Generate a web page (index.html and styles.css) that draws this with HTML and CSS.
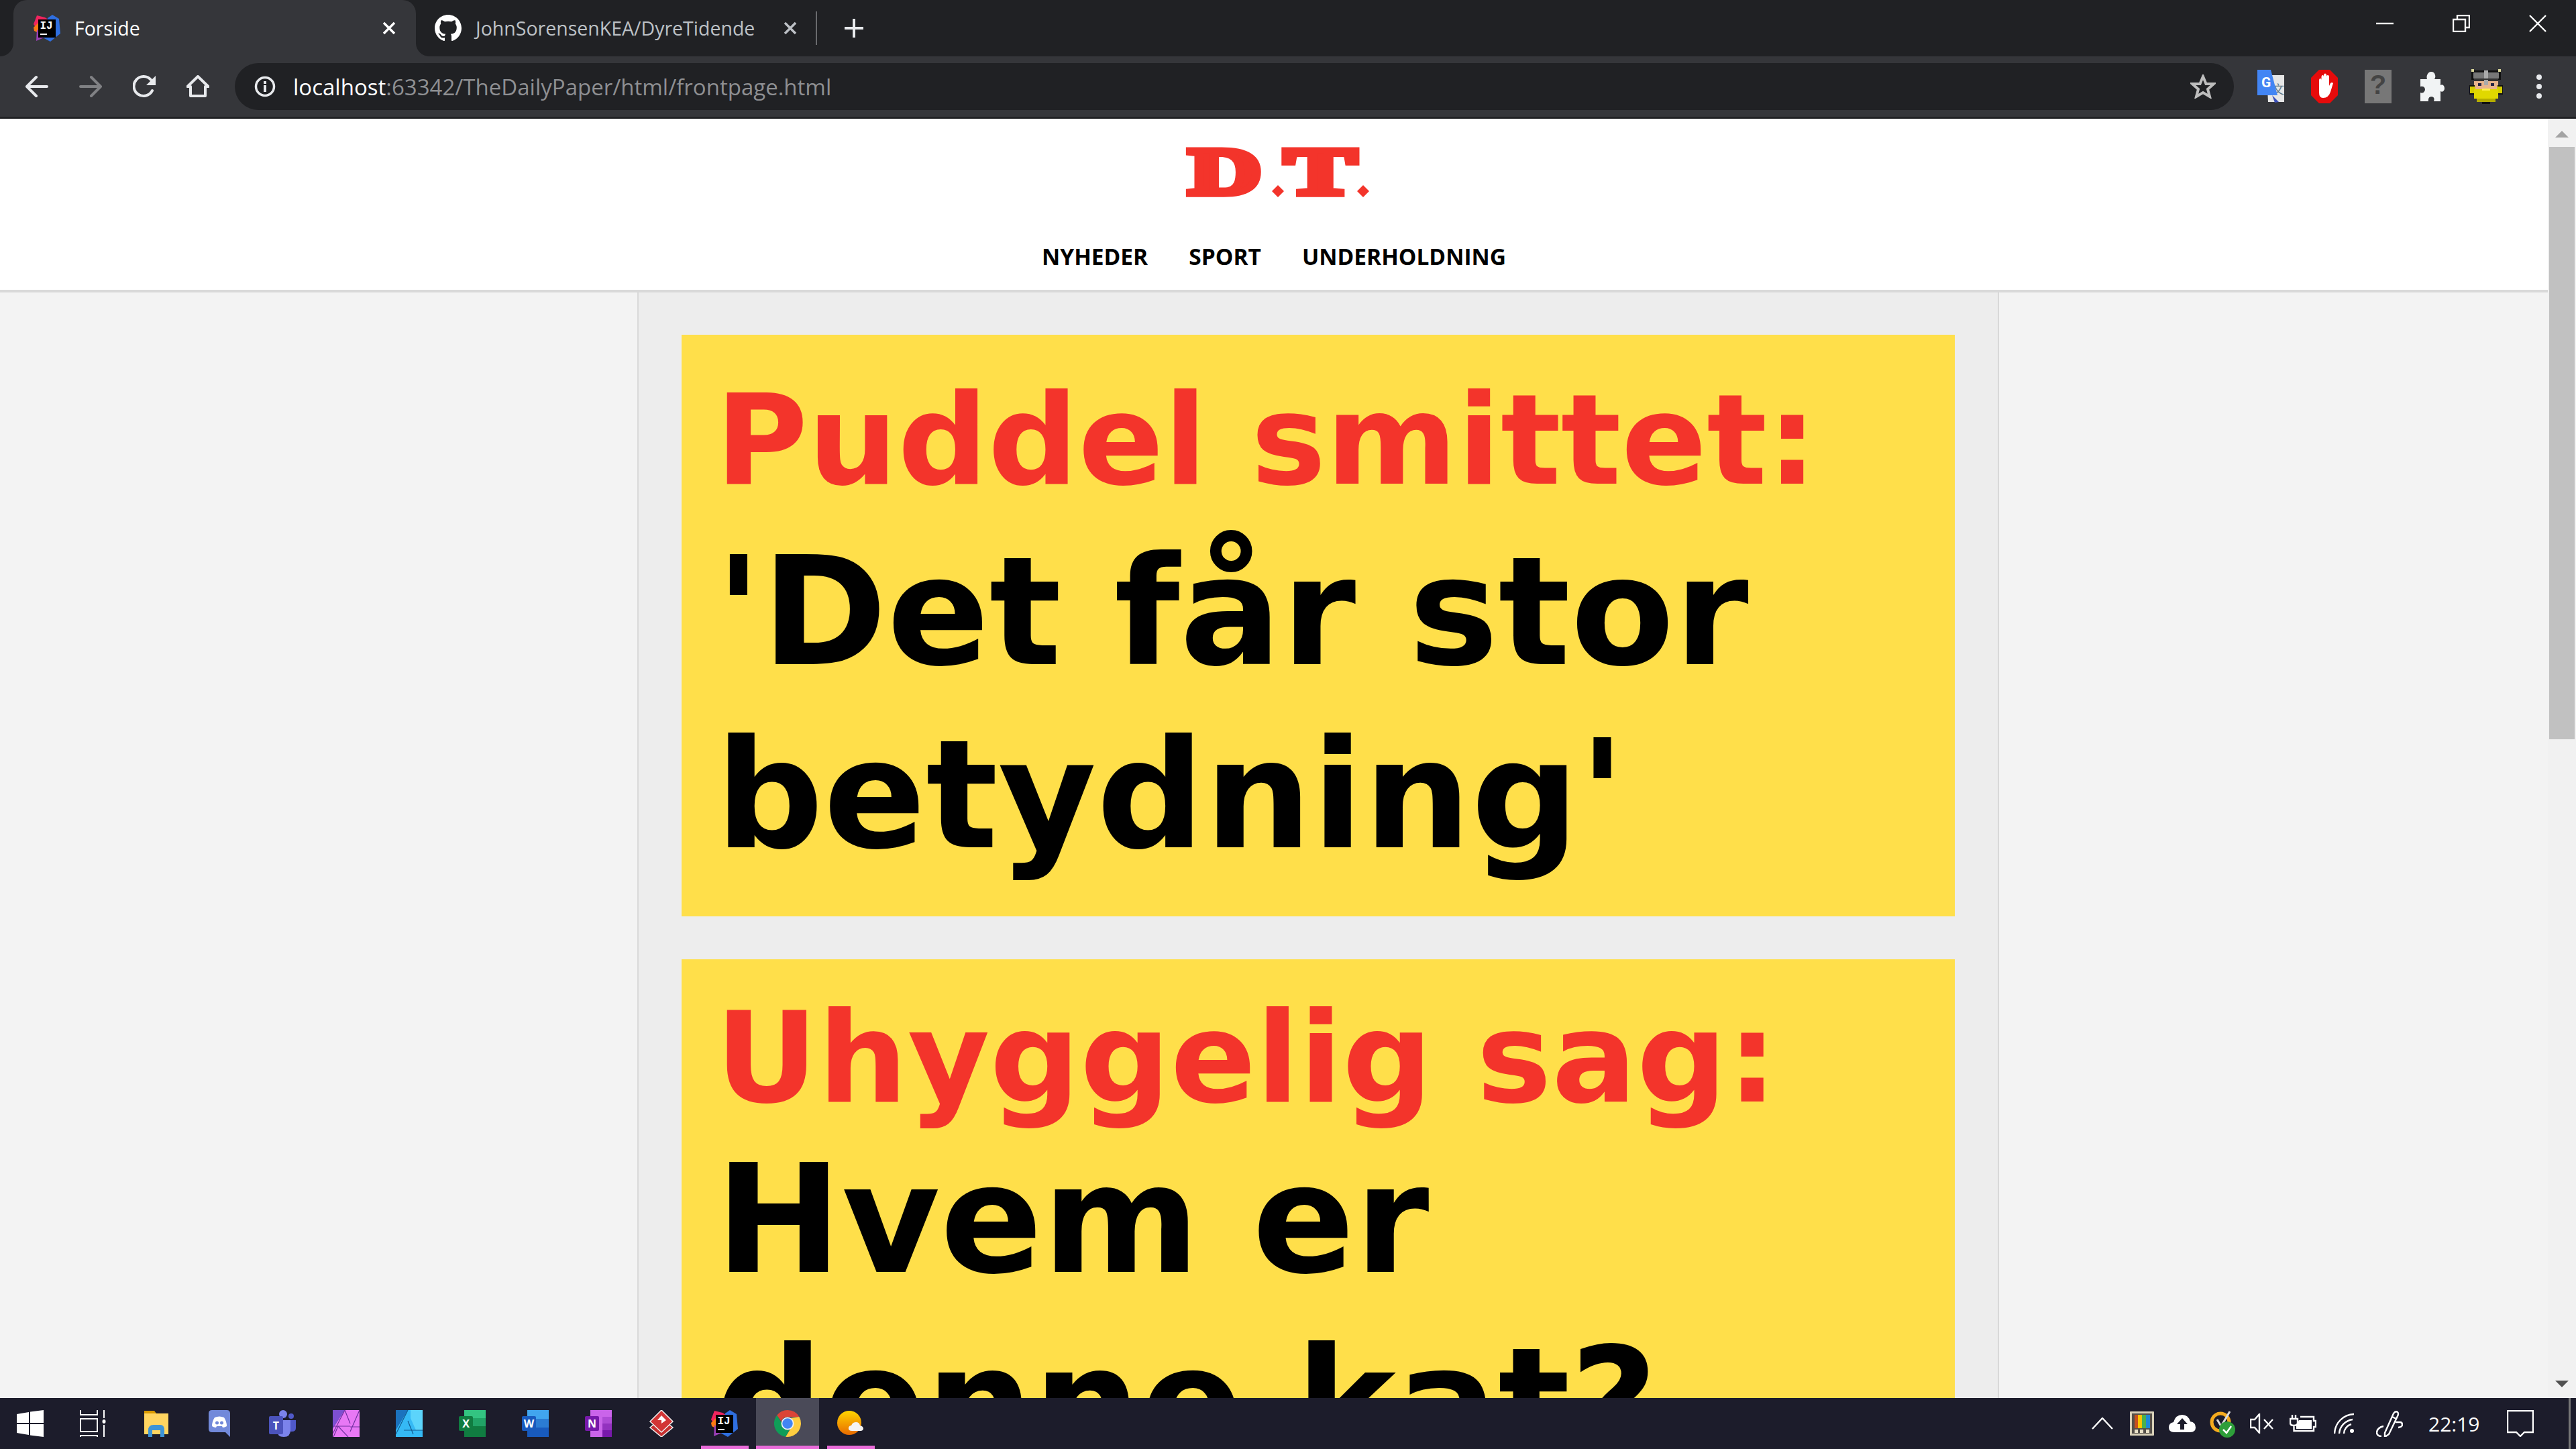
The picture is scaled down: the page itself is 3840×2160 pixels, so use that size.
FILE: index.html
```html
<!DOCTYPE html>
<html lang="da">
<head>
    <meta charset="UTF-8">
    <title>Forside</title>
    <link rel="stylesheet" href="styles.css">
</head>
<body>
<svg class="defs" width="0" height="0">
    <defs>
        <symbol id="ij" viewBox="0 0 40 40">
            <polygon points="5,1 17,4 25,9 8,26 0,14" fill="#f0245e"/>
            <polygon points="0,19 7,12 9,28 1,24" fill="#f97a12"/>
            <polygon points="21,5 28,0 38,6 40,28 25,40 12,33" fill="#2f6fe0"/>
            <polygon points="5,22 18,33 4,39" fill="#9a3fb5"/>
            <rect x="7" y="7" width="26" height="27" fill="#000"/>
            <text x="9.5" y="21" class="ij-text">IJ</text>
            <rect x="10" y="28" width="10" height="2" fill="#fff"/>
        </symbol>
    </defs>
</svg>

<div class="window">
    <div class="tabstrip">
        <div class="tab tab-active">
            <svg class="favicon"><use href="#ij"/></svg>
            <span class="tab-title">Forside</span>
            <svg class="tab-close" viewBox="0 0 20 20"><path d="M2 2L18 18M18 2L2 18"/></svg>
        </div>
        <div class="tab tab-other">
            <svg class="favicon" viewBox="0 0 16 16"><path fill="#fff" d="M8 0C3.58 0 0 3.58 0 8c0 3.54 2.29 6.53 5.47 7.59.4.07.55-.17.55-.38 0-.19-.01-.82-.01-1.49-2.01.37-2.53-.49-2.69-.94-.09-.23-.48-.94-.82-1.13-.28-.15-.68-.52-.01-.53.63-.01 1.08.58 1.23.82.72 1.21 1.87.87 2.33.66.07-.52.28-.87.51-1.07-1.78-.2-3.64-.89-3.64-3.95 0-.87.31-1.59.82-2.15-.08-.2-.36-1.02.08-2.12 0 0 .67-.21 2.2.82.64-.18 1.32-.27 2-.27.68 0 1.36.09 2 .27 1.53-1.04 2.2-.82 2.2-.82.44 1.1.16 1.92.08 2.12.51.56.82 1.27.82 2.15 0 3.07-1.87 3.75-3.65 3.95.29.25.54.73.54 1.48 0 1.07-.01 1.93-.01 2.2 0 .21.15.46.55.38A8.013 8.013 0 0016 8c0-4.42-3.58-8-8-8z"/></svg>
            <span class="tab-title">JohnSorensenKEA/DyreTidende</span>
            <svg class="tab-close" viewBox="0 0 20 20"><path d="M2 2L18 18M18 2L2 18"/></svg>
        </div>
        <div class="tab-sep"></div>
        <svg class="new-tab" viewBox="0 0 30 30"><path d="M15 1V29M1 15H29"/></svg>
        <div class="window-controls">
            <svg class="win-btn" viewBox="0 0 26 26"><path d="M0 13H26"/></svg>
            <svg class="win-btn" viewBox="0 0 26 26"><path d="M1 7H19V25H1ZM7 7V1H25V19H19"/></svg>
            <svg class="win-btn" viewBox="0 0 26 26"><path d="M1 1L25 25M25 1L1 25"/></svg>
        </div>
    </div>

    <div class="toolbar">
        <svg class="nav-icon" viewBox="0 0 34 34"><path d="M32 17H3M16 3L2 17L16 31"/></svg>
        <svg class="nav-icon nav-off" viewBox="0 0 34 34"><path d="M2 17H31M18 3L32 17L18 31"/></svg>
        <svg class="nav-icon" viewBox="0 0 34 34"><path d="M29 23A14.5 14.5 0 1 1 27 7"/><path class="solid" d="M34 1V15H20Z"/></svg>
        <svg class="nav-icon" viewBox="0 0 34 34"><path d="M17 2L1.5 17H6V31H28V17H32.5Z"/></svg>
        <div class="omnibox">
            <svg class="info-icon" viewBox="0 0 32 32"><circle cx="16" cy="16" r="13.5"/><rect x="14" y="14" width="4" height="10" class="solid"/><rect x="14" y="8" width="4" height="4" class="solid"/></svg>
            <span class="url"><span class="url-host">localhost</span>:63342/TheDailyPaper/html/frontpage.html</span>
            <svg class="star" viewBox="0 0 38 36"><path d="M19 3L23.5 14H35L26 22L29 33L19 27L9 33L12 22L3 14H14.5Z"/></svg>
        </div>
        <div class="extensions">
            <svg class="ext" viewBox="0 0 40 50">
                <polygon points="14,8 40,8 40,48 16,48" fill="#e6e6e6"/>
                <text x="22" y="36" class="ext-zh">文</text>
                <polygon points="22,38 32,48 26,49" fill="#3b50b8"/>
                <polygon points="0,0 20,0 30,38 0,38" fill="#4285f4"/>
                <text x="6" y="26" class="ext-g">G</text>
            </svg>
            <svg class="ext" viewBox="0 0 40 50">
                <polygon points="12,0 28,0 40,12 40,38 28,50 12,50 0,38 0,12" fill="#e60b0b"/>
                <path fill="#fff" d="M12 16Q12 13 14 13Q15.5 13 15.5 16V11Q15.5 8 17.5 8Q19 8 19 11V8Q19 5.5 21 5.5Q23 5.5 23 8V10Q23 8 25 8Q27 8 27 11V24L29 20Q31 18 33 20L29 33Q26 42 18 42Q12 42 12 34Z"/>
            </svg>
            <svg class="ext" viewBox="0 0 40 50">
                <rect width="40" height="50" fill="#777"/>
                <text x="20" y="36" class="ext-q">?</text>
            </svg>
            <svg class="ext ext-puzzle" viewBox="0 0 36 44">
                <path fill="#f1f3f4" d="M0 11H10Q9 8 10 5Q12 0 16 0Q21 0 22 5Q23 8 21 11H30V20Q33 18 35 21Q37 25 35 28Q33 31 30 29V44H20Q22 38 17 37Q11 37 12 44H0V31Q5 33 7 27Q7 21 0 22Z"/>
            </svg>
            <svg class="ext ext-viking" viewBox="0 0 52 52" shape-rendering="crispEdges">
                <rect x="4" y="2" width="44" height="14" fill="#111"/>
                <rect x="4" y="0" width="4" height="4" fill="#d8d49a"/><rect x="44" y="0" width="4" height="4" fill="#d8d49a"/>
                <rect x="7" y="5" width="38" height="9" fill="#777"/>
                <rect x="23" y="2" width="6" height="20" fill="#aaa"/>
                <rect x="8" y="14" width="36" height="4" fill="#333"/>
                <rect x="8" y="18" width="36" height="14" fill="#e8b48c"/>
                <rect x="23" y="16" width="6" height="8" fill="#aaa"/>
                <rect x="14" y="21" width="5" height="4" fill="#224"/><rect x="33" y="21" width="5" height="4" fill="#224"/>
                <rect x="1" y="24" width="8" height="14" fill="#111"/><rect x="43" y="24" width="8" height="14" fill="#111"/>
                <rect x="2" y="26" width="8" height="10" fill="#d4cc00"/><rect x="42" y="26" width="8" height="10" fill="#d4cc00"/>
                <rect x="8" y="30" width="36" height="14" fill="#e0d800"/>
                <rect x="12" y="44" width="28" height="5" fill="#b5ad00"/>
                <rect x="20" y="49" width="12" height="3" fill="#111"/>
                <rect x="20" y="29" width="12" height="3" fill="#fff04a"/>
            </svg>
            <svg class="ext ext-dots" viewBox="0 0 8 36"><circle cx="4" cy="4" r="4"/><circle cx="4" cy="18" r="4"/><circle cx="4" cy="32" r="4"/></svg>
        </div>
    </div>

    <div class="viewport">
        <div class="page">
            <header class="site-header">
                <svg class="logo" viewBox="0 -25 280 130">
                    <text x="0" y="70.5" class="logo-text" transform="translate(6 0) scale(1.5 1)">D</text>
                    <text x="0" y="70.5" class="logo-text" transform="translate(149 0) scale(1.6 1)">T</text>
                    <polygon points="139,58 148,67 139,76 130,67"/>
                    <polygon points="266,58 275,67 266,76 257,67"/>
                </svg>
                <nav class="site-nav">
                    <a href="#">NYHEDER</a>
                    <a href="#">SPORT</a>
                    <a href="#">UNDERHOLDNING</a>
                </nav>
            </header>
            <main class="content">
                <article class="story story-lead">
                    <h2 class="kicker">Puddel smittet:</h2>
                    <h1 class="headline">'Det får stor betydning'</h1>
                </article>
                <article class="story">
                    <h2 class="kicker">Uhyggelig sag:</h2>
                    <h1 class="headline">Hvem er denne kat?</h1>
                </article>
            </main>
        </div>
        <div class="scrollbar">
            <div class="arrow-up"></div>
            <div class="thumb"></div>
            <div class="arrow-down"></div>
        </div>
    </div>

    <div class="taskbar">
        <div class="task-apps">
            <div class="app">
                <svg viewBox="0 0 40 40"><path fill="#fff" d="M0 6L18 3V19H0ZM20 2.6L40 0V19H20ZM0 21H18V37L0 34ZM20 21H40V40L20 37.4Z"/></svg>
            </div>
            <div class="app">
                <svg viewBox="0 0 40 40" fill="none" stroke="#fff" stroke-width="2"><path d="M1 0V7H26V0M1 13H26V32H1ZM1 40V38H26V40M36 0V12M36 22V40"/><ellipse cx="36" cy="17" rx="2.5" ry="3" fill="#fff" stroke="none"/></svg>
            </div>
            <div class="app">
                <svg viewBox="0 0 36 40"><path fill="#d99a00" d="M0 1H15L18 5H36V14H0Z"/><path fill="#ffd560" d="M0 5H16L18 5H36V36H0Z"/><path fill="#3e94d6" d="M6 40V30Q6 22 14 22H24Q30 22 30 30V40H24V30H12V40Z"/></svg>
            </div>
            <div class="app">
                <svg viewBox="0 0 32 40"><path fill="#7289da" d="M5 0H27Q32 0 32 5V40L25 33H5Q0 33 0 28V5Q0 0 5 0Z"/><path fill="#fff" d="M9 11Q16 8 23 11Q27 17 27 24Q24 26 21 26L20 24H12L11 26Q8 26 5 24Q5 17 9 11Z"/><circle cx="12.5" cy="19" r="2.5" fill="#7289da"/><circle cx="19.5" cy="19" r="2.5" fill="#7289da"/></svg>
            </div>
            <div class="app">
                <svg viewBox="0 0 40 40"><circle cx="21" cy="6" r="6" fill="#7b83eb"/><circle cx="33" cy="9" r="4" fill="#5059c9"/><path fill="#5059c9" d="M28 15H40V27Q40 32 34 32H28Z"/><path fill="#7b83eb" d="M12 15H32V30Q32 40 22 40Q12 40 12 30Z"/><rect y="9" width="21" height="27" rx="2" fill="#4b53bc"/><text x="10.5" y="29" class="tile-letter">T</text></svg>
            </div>
            <div class="app">
                <svg viewBox="0 0 40 40"><rect width="40" height="40" fill="#e878f5"/><polygon points="0,0 18,0 0,28" fill="#7d4fd0"/><path fill="none" stroke="#7030a0" stroke-width="1.2" d="M18 0L0 35M18 0L26 20M0 24H26M40 0L26 32M26 25H40M8 24L23 40M8 24L1 40"/></svg>
            </div>
            <div class="app">
                <svg viewBox="0 0 40 40"><rect width="40" height="40" fill="#35b9f5"/><polygon points="0,0 18,0 0,30" fill="#1b72be"/><polygon points="22,0 40,0 40,30 30,30 22,12" fill="#5cd4fb"/><path fill="none" stroke="#135a90" stroke-width="1.2" d="M18 0L0 36M18 16L26 36M12 30H40"/></svg>
            </div>
            <div class="app">
                <svg viewBox="0 0 40 40"><rect x="8" width="32" height="14" fill="#33c481"/><rect x="8" y="12" width="32" height="14" fill="#21a366"/><rect x="8" y="24" width="32" height="16" fill="#107c41"/><rect y="9" width="21" height="22" rx="2" fill="#107c41"/><text x="10.5" y="26" class="tile-letter">X</text></svg>
            </div>
            <div class="app">
                <svg viewBox="0 0 40 40"><rect x="8" width="32" height="14" fill="#41a5ee"/><rect x="8" y="13" width="32" height="14" fill="#2b7cd3"/><rect x="8" y="26" width="32" height="14" fill="#185abd"/><rect y="9" width="21" height="22" rx="2" fill="#185abd"/><text x="10.5" y="26" class="tile-letter">W</text></svg>
            </div>
            <div class="app">
                <svg viewBox="0 0 40 40"><rect x="8" width="32" height="40" fill="#ca64ea"/><rect x="26" y="10" width="14" height="10" fill="#ae4bd5"/><rect x="26" y="20" width="14" height="10" fill="#9332bf"/><rect x="26" y="30" width="14" height="10" fill="#7719aa"/><rect y="9" width="21" height="22" rx="2" fill="#7719aa"/><text x="10.5" y="26" class="tile-letter">N</text></svg>
            </div>
            <div class="app">
                <svg viewBox="0 0 36 40"><polygon points="18,12 35,26 18,40 1,26" fill="#c63030" stroke="#eee" stroke-width="1.5"/><polygon points="18,0 35,17 18,33 1,17" fill="#d23535" stroke="#eee" stroke-width="1.5"/><path fill="#fff" d="M18 8L25 15L18 20V15H12Z"/></svg>
            </div>
            <div class="app app-open">
                <svg><use href="#ij"/></svg>
            </div>
            <div class="app app-open app-active">
                <svg viewBox="0 0 36 36">
                    <path fill="#db4437" d="M18 0A18 18 0 0 1 33.6 9H18A9 9 0 0 0 9.5 15L3.7 7A18 18 0 0 1 18 0Z"/>
                    <path fill="#0f9d58" d="M3.7 7L11 19A8 8 0 0 0 20.5 26.5L15.5 35.8A18 18 0 0 1 3.7 7Z"/>
                    <path fill="#ffcd40" d="M33.6 9A18 18 0 0 1 15.5 35.8L25 20A8 8 0 0 0 22 10.5Z"/>
                    <circle cx="18" cy="18" r="8.5" fill="#f1f3f4"/><circle cx="18" cy="18" r="7" fill="#4285f4"/>
                </svg>
            </div>
            <div class="app app-open">
                <svg viewBox="0 0 40 38">
                    <defs><linearGradient id="sun" x1="0" y1="0" x2="0" y2="1"><stop offset="0" stop-color="#ffd500"/><stop offset="1" stop-color="#e86a00"/></linearGradient></defs>
                    <circle cx="18" cy="18" r="18" fill="url(#sun)"/>
                    <path fill="#f4f4f4" d="M22 30Q16 30 17 25Q18 22 21 22Q23 17 28 17Q33 17 34 22Q39 23 39 27Q38 30 35 30Z"/>
                </svg>
            </div>
        </div>
        <div class="tray">
            <svg class="tray-icon tray-caret" viewBox="0 0 32 18"><path d="M1 17L16 1L31 17"/></svg>
            <svg class="tray-icon tray-color" viewBox="0 0 36 36"><rect width="36" height="36" rx="1" fill="#d8d0b8"/><rect x="3" y="3" width="30" height="30" fill="#55504a"/><rect x="7" y="5" width="5" height="20" fill="#c8501e"/><rect x="12" y="5" width="6" height="20" fill="#ffc400"/><rect x="18" y="5" width="6" height="20" fill="#4cb04c"/><rect x="24" y="5" width="6" height="20" fill="#1e88d8"/><rect x="7" y="27" width="5" height="5" fill="#e8e0c8"/><rect x="15" y="27" width="5" height="5" fill="#e8e0c8"/><rect x="24" y="27" width="5" height="5" fill="#e8e0c8"/></svg>
            <svg class="tray-icon tray-cloud" viewBox="0 0 40 26"><path fill="#fff" d="M8 26Q0 26 0 19Q0 12 7 11Q10 0 20 0Q29 0 32 10Q40 11 40 19Q40 26 32 26Z"/><path fill="#1c1c2b" d="M20 5L28 14H23V22H17V14H12Z"/></svg>
            <svg class="tray-icon tray-norton" viewBox="0 0 40 42"><circle cx="16" cy="19" r="13" fill="none" stroke="#f5ab1e" stroke-width="5"/><path fill="none" stroke="#ddd" stroke-width="3" d="M11 15L17 25L30 3"/><circle cx="26" cy="30" r="12" fill="#2e9e3a"/><path fill="none" stroke="#fff" stroke-width="2.5" d="M20 30L25 35L32 25"/></svg>
            <svg class="tray-icon tray-mute" viewBox="0 0 36 30"><path d="M1 9H7L14 1V29L7 21H1ZM21 9L34 23M34 9L21 23"/></svg>
            <svg class="tray-icon tray-battery" viewBox="0 0 40 26"><path d="M4 0V6M9 0V6M1 6H12V12Q12 16 6.5 16Q1 16 1 12ZM6.5 16V24H36V18H39V9H36V3H16"/><path class="solid" d="M14 8H33V21H10V16Z"/></svg>
            <svg class="tray-icon tray-wifi" viewBox="0 0 32 32"><path d="M1 31A30 30 0 0 1 30 2M8 31A23 23 0 0 1 28 10M15 31A15 15 0 0 1 26 17"/><circle class="solid" cx="27" cy="27" r="3"/></svg>
            <svg class="tray-icon tray-pen" viewBox="0 0 40 40"><path d="M13 34L26 5Q29 1 32 3Q34 5 32 9L19 36L13 40ZM24 10L30 13M29 18H36Q39 18 39 22Q39 25 33 26M11 24Q2 26 1 33Q1 39 8 39"/></svg>
            <span class="clock">22:19</span>
            <svg class="tray-icon tray-note" viewBox="0 0 40 40"><path d="M1 1H39V33H26L20 39L14 33H1Z"/></svg>
            <div class="desktop-sep"></div>
        </div>
    </div>
</div>
</body>
</html>
```

FILE: styles.css
```css
* {
    box-sizing: border-box;
}
html, body {
    margin: 0;
    padding: 0;
    height: 100%;
    overflow: hidden;
}
body {
    font-family: "Open Sans", Arial, sans-serif;
}
.defs {
    position: absolute;
}
.window {
    width: 3840px;
    height: 2160px;
    display: flex;
    flex-direction: column;
}
.solid {
    fill: currentColor;
    stroke: none;
}

/* tab strip */
.tabstrip {
    height: 84px;
    flex: none;
    background-color: #202124;
    display: flex;
    align-items: center;
    padding-left: 20px;
}
.tab {
    height: 84px;
    display: flex;
    align-items: center;
    position: relative;
}
.tab-active {
    width: 600px;
    padding-left: 30px;
    background-color: #35363a;
    border-radius: 20px 20px 0 0;
    color: #fff;
}
.tab-active::before, .tab-active::after {
    content: '';
    position: absolute;
    bottom: 0;
    width: 20px;
    height: 20px;
}
.tab-active::before {
    left: -20px;
    background: radial-gradient(circle at 0 0, #202124 19.5px, #35363a 20.5px);
}
.tab-active::after {
    right: -20px;
    background: radial-gradient(circle at 100% 0, #202124 19.5px, #35363a 20.5px);
}
.tab-other {
    width: 604px;
    padding-left: 28px;
    color: #bdc1c6;
}
.favicon {
    width: 40px;
    height: 40px;
    flex: none;
}
.tab-title {
    font-size: 28.5px;
    margin-left: 21px;
    white-space: nowrap;
    flex: 1;
}
.tab-close {
    width: 20px;
    height: 20px;
    flex: none;
    fill: none;
    stroke: currentColor;
    stroke-width: 3.5;
    margin-right: 30px;
}
.tab-other .tab-close {
    margin-right: 36px;
}
.tab-sep {
    width: 2px;
    height: 50px;
    background-color: #6a6b6e;
    margin-left: -8px;
}
.new-tab {
    width: 30px;
    height: 30px;
    margin-left: 40px;
    fill: none;
    stroke: #e8eaed;
    stroke-width: 4;
}
.window-controls {
    margin-left: auto;
    align-self: flex-start;
    display: flex;
    gap: 88px;
    padding: 22px 44px 0 0;
}
.win-btn {
    width: 26px;
    height: 26px;
    fill: none;
    stroke: #fff;
    stroke-width: 2.4;
}

/* toolbar */
.toolbar {
    height: 93px;
    flex: none;
    background-color: #35363a;
    border-bottom: 3px solid #202124;
    display: flex;
    align-items: center;
    padding: 0 0 0 38px;
    color: #f1f3f4;
}
.nav-icon {
    width: 34px;
    height: 34px;
    margin-right: 46px;
    flex: none;
    fill: none;
    stroke: #e8eaed;
    stroke-width: 4;
    stroke-linejoin: round;
    stroke-linecap: round;
    color: #e8eaed;
}
.nav-off {
    stroke: #808184;
}
.nav-icon:nth-child(4) {
    margin-right: 38px;
}
.omnibox {
    width: 2980px;
    height: 70px;
    flex: none;
    background-color: #202124;
    border-radius: 35px;
    display: flex;
    align-items: center;
    padding-left: 29px;
}
.info-icon {
    width: 32px;
    height: 32px;
    fill: none;
    stroke: #e8eaed;
    stroke-width: 3.5;
    color: #e8eaed;
}
.url {
    font-size: 33px;
    color: #8e8f92;
    margin-left: 26px;
    white-space: nowrap;
    flex: 1;
}
.url-host {
    color: #fff;
}
.star {
    width: 38px;
    height: 36px;
    margin-right: 27px;
    fill: none;
    stroke: #bdbdbd;
    stroke-width: 4;
}
.extensions {
    display: flex;
    align-items: center;
    margin-left: 35px;
}
.ext {
    width: 40px;
    height: 50px;
    flex: none;
    margin-right: 40px;
}
.ext-puzzle {
    width: 36px;
    height: 44px;
    margin-left: 3px;
    margin-right: 36px;
}
.ext-viking {
    width: 52px;
    height: 52px;
    margin-right: 49px;
}
.ext-dots {
    width: 8px;
    height: 36px;
    fill: #e8eaed;
}
.ext-zh {
    font-family: "Noto Sans CJK SC", sans-serif;
    font-size: 18px;
    fill: #5f7a8a;
}
.ext-g {
    font-family: Roboto, Arial, sans-serif;
    font-weight: 700;
    font-size: 21px;
    fill: #fff;
}
.ext-q {
    font-family: "Liberation Sans", Arial, sans-serif;
    font-weight: 700;
    font-size: 40px;
    fill: #444;
    text-anchor: middle;
}
.ij-text {
    font-family: "Liberation Mono", monospace;
    font-weight: 700;
    font-size: 16px;
    fill: #fff;
}

/* page */
.viewport {
    flex: 1;
    min-height: 0;
    display: flex;
}
.page {
    flex: 1;
    min-width: 0;
    overflow: hidden;
    background-color: #f3f3f3;
}
.site-header {
    height: 259px;
    background-color: #fff;
    border-bottom: 4px solid #d9d9d9;
    display: flex;
    flex-direction: column;
    align-items: center;
}
.logo {
    width: 280px;
    height: 130px;
    flex: none;
    margin-top: 16px;
    margin-left: 14px;
    fill: #f3342b;
}
.logo-text {
    font-family: "Liberation Serif", serif;
    font-weight: 700;
    font-size: 100px;
    stroke: #f3342b;
    stroke-width: 9px;
}
.site-nav {
    display: flex;
    gap: 61px;
    margin-top: 35px;
}
.site-nav a {
    color: #000;
    font-size: 33.5px;
    font-weight: 700;
    text-decoration: none;
    line-height: 48px;
}
.content {
    margin-left: 25%;
    width: 2030px;
    min-height: 1800px;
    padding: 63px 64px;
    background-color: #ededed;
    border-left: 2px solid #d9d9d9;
    border-right: 2px solid #d9d9d9;
}
.story {
    background-color: #ffdf4a;
    padding: 42px 51px 0;
    margin-bottom: 64px;
    height: 867px;
    font-family: "DejaVu Sans", Verdana, sans-serif;
    font-weight: 700;
}
.kicker {
    margin: 0;
    color: #f3342b;
    font-size: 188px;
    line-height: 210px;
}
.story-lead {
    padding-top: 37px;
}
.story-lead .kicker {
    line-height: 240px;
}
.headline {
    margin: 0;
    color: #000;
    font-size: 225px;
    line-height: 273px;
}

/* scrollbar */
.scrollbar {
    width: 42px;
    flex: none;
    background-color: #f1f1f1;
    display: flex;
    flex-direction: column;
    align-items: center;
    padding: 0 2px;
}
.arrow-up {
    width: 0;
    height: 0;
    margin-top: 18px;
    border-left: 10px solid transparent;
    border-right: 10px solid transparent;
    border-bottom: 10px solid #a3a3a3;
    flex: none;
}
.thumb {
    width: 100%;
    height: 883px;
    margin-top: 14px;
    background-color: #c1c1c1;
    flex: none;
}
.arrow-down {
    width: 0;
    height: 0;
    margin-top: auto;
    margin-bottom: 16px;
    border-left: 10px solid transparent;
    border-right: 10px solid transparent;
    border-top: 10px solid #505050;
    flex: none;
}

/* taskbar */
.taskbar {
    height: 76px;
    flex: none;
    background-color: #1c1c2b;
    display: flex;
    align-items: stretch;
}
.task-apps {
    display: flex;
    margin-left: -2px;
}
.app {
    width: 94.1px;
    display: flex;
    align-items: center;
    justify-content: center;
    position: relative;
}
.app svg {
    width: 40px;
    height: 40px;
}
.app-open::after {
    content: '';
    position: absolute;
    bottom: 0;
    width: 71px;
    height: 5px;
    background-color: #e96bd9;
}
.app-active {
    background-color: #4a4a58;
}
.app-active::after {
    width: 100%;
}
.tile-letter {
    font-family: "Open Sans", Arial, sans-serif;
    font-weight: 700;
    font-size: 16px;
    fill: #fff;
    text-anchor: middle;
}
.tray {
    margin-left: auto;
    display: flex;
    align-items: center;
    color: #fff;
}
.tray-icon {
    flex: none;
    fill: none;
    stroke: #fff;
    stroke-width: 2.4;
    color: #fff;
}
.tray-caret { width: 32px; height: 18px; margin-right: 25px; }
.tray-color { width: 36px; height: 36px; margin-right: 22px; stroke: none; }
.tray-cloud { width: 40px; height: 26px; margin-right: 21px; stroke: none; }
.tray-norton { width: 40px; height: 42px; margin-right: 20px; stroke: none; }
.tray-mute { width: 36px; height: 30px; margin-right: 23px; }
.tray-battery { width: 40px; height: 26px; margin-right: 26px; }
.tray-wifi { width: 32px; height: 32px; margin-right: 31px; }
.tray-pen { width: 40px; height: 40px; margin-right: 38px; }
.clock {
    font-size: 30px;
    width: 70px;
    margin-right: 47px;
    white-space: nowrap;
}
.tray-note { width: 40px; height: 40px; margin-right: 52px; }
.desktop-sep {
    width: 3px;
    align-self: stretch;
    background-color: #777;
    margin-right: 8px;
}
```
